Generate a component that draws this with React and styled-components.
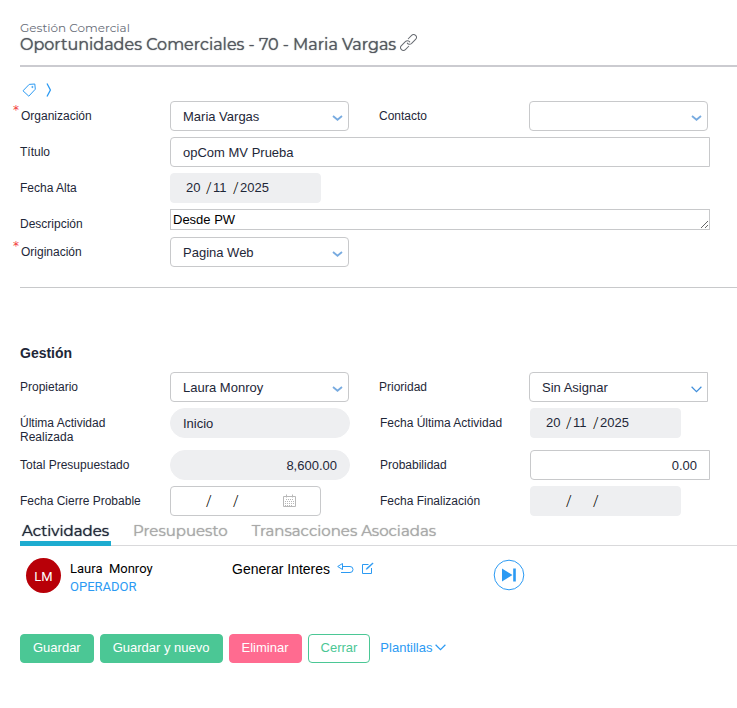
import React from "react";
import styled, { createGlobalStyle, css } from "styled-components";

const c = {
  ink: "#1e2738",
  grey: "#54585f",
  line: "#c8c9cb",
  fill: "#eeeff1",
  blue: "#2b9af3",
  green: "#4bc795",
  pink: "#ff6b90",
};

const Global = createGlobalStyle`
  *, *::before, *::after { box-sizing: border-box; }
  body { margin: 0; background: #fff; color: ${c.ink}; font-family: "Liberation Sans", Arial, sans-serif; font-size: 13px; }
  button, input, select, textarea { font-family: inherit; font-size: 13px; color: inherit; }
`;

const Page = styled.main`
  padding: 20px 0 40px 20px;
`;

const Header = styled.header`
  border-bottom: 2px solid #cbcbd0;
  padding-bottom: 12px;
`;

const Module = styled.div`
  font: 400 12px/16px Montserrat, Inter, sans-serif;
  color: #686d78;
`;

const Title = styled.h1`
  display: flex;
  align-items: center;
  gap: 4px;
  margin: 0;
  height: 17px;
  font: 400 16px/17px Montserrat, Inter, sans-serif;
  color: ${c.grey};
  text-shadow: 0 0 1px ${c.grey};
  white-space: nowrap;
`;

const IconButton = styled.button`
  display: inline-flex;
  flex: none;
  padding: 0;
  border: 0;
  background: none;
  color: ${(p) => p.$color || c.blue};
  cursor: pointer;
`;

const LinkButton = styled(IconButton)`
  align-self: flex-end;
  margin-bottom: 2px;
`;

const Tools = styled.div`
  display: flex;
  align-items: center;
  gap: 9px;
  height: 34px;
  padding: 12px 0 0 2px;
`;

const Form = styled.section`
  display: flex;
  flex-direction: column;
  gap: 6px;
  padding-right: 27px;
`;

const Row = styled.div`
  display: grid;
  grid-template-columns: 150px minmax(0, 1fr) 180px minmax(0, 1fr);
  align-items: start;
  padding-right: ${(p) => (p.$inset ? "2px" : "0")};
  & > :nth-child(3) { margin-left: 30px; }
`;

const Label = styled.label`
  position: relative;
  padding: 8px 24px 0 0;
  font-size: 12px;
  line-height: 14px;
  white-space: ${(p) => (p.$wrap ? "normal" : "nowrap")};
  ${(p) =>
    p.$required &&
    css`
      padding-left: 1px;
      &::before {
        content: "*";
        position: absolute;
        left: -7px;
        top: 2px;
        color: #f23c3c;
        font: 12px/14px "DejaVu Sans", sans-serif;
      }
    `}
`;

const box = css`
  width: 100%;
  height: 30px;
  border: 1px solid ${c.line};
  border-radius: ${(p) => (p.$square ? "4px 0 0 4px" : "4px")};
  background: #fff;
  outline-color: ${c.blue};
`;

const SelectWrap = styled.div`
  position: relative;
  svg {
    position: absolute;
    right: 6px;
    top: 14px;
    pointer-events: none;
  }
`;

const SelectBox = styled.select`
  ${box}
  display: block;
  appearance: none;
  padding: 0 24px 0 12px;
`;

const TextBox = styled.input`
  ${box}
  display: block;
  padding: 0 12px;
  grid-column: ${(p) => (p.$wide ? "2 / -1" : "auto")};
  text-align: ${(p) => (p.$number ? "right" : "left")};
  ${(p) =>
    p.readOnly &&
    css`
      border-color: ${c.fill};
      border-radius: 15px;
      background: ${c.fill};
    `}
`;

const Area = styled.textarea`
  display: block;
  grid-column: 2 / -1;
  width: 100%;
  height: 21px;
  margin: 0;
  padding: 2px;
  border: 1px solid ${c.line};
  color: #000;
  line-height: 15px;
  resize: both;
  overflow: hidden;
`;

const DateBox = styled.div`
  ${box}
  display: flex;
  align-items: center;
  width: 151px;
  padding-left: 15px;
  ${(p) =>
    p.$locked &&
    css`
      border-color: ${c.fill};
      background: ${c.fill};
    `}
  span { width: 7px; font: 300 16px/20px "Open Sans", sans-serif; color: #000; }
`;

const DatePart = styled.input`
  width: ${(p) => (p.$year ? "38px" : "20px")};
  padding: 0;
  border: 0;
  background: none;
  line-height: 16px;
`;

const Calendar = styled(IconButton)`
  margin-left: 5px;
`;

const Rule = styled.hr`
  margin: 20px 0 0;
  border: 0;
  border-top: 1px solid ${c.line};
`;

const SectionTitle = styled.h2`
  margin: 57px 0 11px;
  font-size: 14px;
  line-height: 16px;
`;

const Tabs = styled.nav`
  display: flex;
  gap: 20px;
  margin-top: 4px;
  border-bottom: 1px solid #d9d9db;
`;

const Tab = styled.button`
  height: 26px;
  margin-bottom: -1px;
  padding: 1px 2px 0;
  border: 0;
  border-bottom: 5px solid ${(p) => (p.$active ? "#1eacd0" : "transparent")};
  background: none;
  && { font: 400 15px/20px Montserrat, Inter, sans-serif; }
  color: ${(p) => (p.$active ? c.ink : "#a9a9a9")};
  text-shadow: 0 0 1px currentColor;
  white-space: nowrap;
  cursor: pointer;
`;

const Activity = styled.article`
  display: grid;
  grid-template-columns: 35px 153px 252px auto;
  gap: 9px;
  padding: 12px 0 0 6px;
`;

const Avatar = styled.div`
  display: grid;
  place-items: center;
  width: 35px;
  height: 35px;
  border-radius: 50%;
  background: #b80008;
  color: #fff;
  font: 13px/17px Roboto, sans-serif;
  padding-top: 2px;
`;

const Person = styled.div`
  padding-top: 2px;
  font: 13px/18px Roboto, sans-serif;
  color: #000;
  white-space: pre;
`;

const Role = styled.div`
  color: ${c.blue};
`;

const Task = styled.div`
  display: flex;
  align-items: center;
  gap: 7px;
  height: 21px;
  color: #000;
  font-size: 14px;
`;

const Actions = styled.footer`
  display: flex;
  flex-wrap: wrap;
  gap: 6px;
  margin-top: 38px;
`;

const Button = styled.button`
  height: 29px;
  padding: 0 12px 2px;
  border: 1px solid ${(p) => p.$tone};
  border-radius: 4px;
  background: ${(p) => (p.$outline ? "#fff" : p.$tone)};
  color: ${(p) => (p.$outline ? p.$tone : "#fff")};
  cursor: pointer;
`;

const Templates = styled(IconButton)`
  align-items: center;
  gap: 3px;
  height: 27px;
  margin-left: 4px;
`;

const Chevron = ({ color = "#78abe0", thin }) => (
  <svg width="11" height="7" viewBox="0 0 11 7" fill="none" stroke={color} strokeWidth={thin ? 1.2 : 1.8} aria-hidden="true">
    <path d={thin ? "M.6.8 5.5 5.6 10.4.8" : "M1 1 5.5 4.8 10 1"} />
  </svg>
);

const Select = ({ id, value, square }) => (
  <SelectWrap>
    <SelectBox id={id} defaultValue={value} $square={square}>
      <option>{value}</option>
    </SelectBox>
    <Chevron thin={square} color={square ? "#3f8edb" : undefined} />
  </SelectWrap>
);

const DateField = ({ id, label, parts = ["", "", ""], locked }) => (
  <DateBox $locked={locked} role="group" aria-label={label}>
    <DatePart id={id} defaultValue={parts[0]} readOnly={locked} aria-label={`${label}: día`} />
    <span>/</span>
    <DatePart defaultValue={parts[1]} readOnly={locked} aria-label={`${label}: mes`} />
    <span>/</span>
    <DatePart $year defaultValue={parts[2]} readOnly={locked} aria-label={`${label}: año`} />
    {!locked && (
      <Calendar type="button" $color="#b8b8b8" aria-label="Calendario">
        <svg width="13" height="14" viewBox="0 0 13 14" fill="none" stroke="currentColor">
          <path d="M.5 2.5h12v10H.5zM3.5 0.5v3M9.5 0.5v3" />
          <path d="M3 5.5h8M2 7.5h9M2 9.5h9M2 11.5h7" strokeDasharray="1 1" />
        </svg>
      </Calendar>
    )}
  </DateBox>
);

export default function App() {
  const today = ["20", "11", "2025"];
  return (
    <>
      <Global />
      <Page>
        <Header>
          <Module>Gestión Comercial</Module>
          <Title>
            Oportunidades Comerciales - 70 - Maria Vargas
            <LinkButton $color="#666a70" aria-label="Enlace">
              <svg width="17" height="17" viewBox="0 0 17 17" fill="none" stroke="currentColor" strokeLinecap="round">
                <g transform="rotate(-45 8.5 8.5)">
                  <path d="M6 11.3H1.3a2.8 2.8 0 0 1 0-5.6h5.9a2.8 2.8 0 0 1 2.6 3.2" />
                  <path d="M11 5.7h4.7a2.8 2.8 0 0 1 0 5.6H9.8a2.8 2.8 0 0 1-2.6-3.2" />
                </g>
              </svg>
            </LinkButton>
          </Title>
        </Header>

        <Tools>
          <IconButton aria-label="Etiquetas">
            <svg width="15" height="14" viewBox="0 0 15 14" fill="none" stroke="currentColor" strokeLinejoin="round">
              <path d="M1 7.8 7.2 1.4 12.8 1 13.3 6.2 6.8 13.2z" />
              <circle cx="10.4" cy="4" r=".6" />
            </svg>
          </IconButton>
          <IconButton aria-label="Mostrar más">
            <svg width="6" height="14" viewBox="0 0 6 14" fill="none" stroke="currentColor" strokeWidth="1.3">
              <path d="M1 .5 4.4 7 1 13.5" />
            </svg>
          </IconButton>
        </Tools>

        <Form>
          <Row $inset>
            <Label htmlFor="org" $required>Organización</Label>
            <Select id="org" value="Maria Vargas" />
            <Label htmlFor="contact">Contacto</Label>
            <Select id="contact" value="" />
          </Row>
          <Row>
            <Label htmlFor="title">Título</Label>
            <TextBox id="title" $wide $square defaultValue="opCom MV Prueba" />
          </Row>
          <Row>
            <Label htmlFor="created">Fecha Alta</Label>
            <DateField id="created" label="Fecha Alta" parts={today} locked />
          </Row>
          <Row>
            <Label htmlFor="desc">Descripción</Label>
            <Area id="desc" rows={1} defaultValue="Desde PW" />
          </Row>
          <Row $inset>
            <Label htmlFor="origin" $required>Originación</Label>
            <Select id="origin" value="Pagina Web" />
          </Row>
        </Form>

        <Rule />
        <SectionTitle>Gestión</SectionTitle>

        <Form>
          <Row $inset>
            <Label htmlFor="owner">Propietario</Label>
            <Select id="owner" value="Laura Monroy" />
            <Label htmlFor="priority">Prioridad</Label>
            <Select id="priority" value="Sin Asignar" square />
          </Row>
          <Row>
            <Label htmlFor="last" $wrap>Última Actividad Realizada</Label>
            <TextBox id="last" readOnly value="Inicio" />
            <Label htmlFor="lastDate">Fecha Última Actividad</Label>
            <DateField id="lastDate" label="Fecha Última Actividad" parts={today} locked />
          </Row>
          <Row>
            <Label htmlFor="total">Total Presupuestado</Label>
            <TextBox id="total" readOnly $number value="8,600.00" />
            <Label htmlFor="chance">Probabilidad</Label>
            <TextBox id="chance" $number $square defaultValue="0.00" />
          </Row>
          <Row>
            <Label htmlFor="close">Fecha Cierre Probable</Label>
            <DateField id="close" label="Fecha Cierre Probable" />
            <Label htmlFor="end">Fecha Finalización</Label>
            <DateField id="end" label="Fecha Finalización" locked />
          </Row>
        </Form>

        <Tabs>
          <Tab $active>Actividades</Tab>
          <Tab>Presupuesto</Tab>
          <Tab>Transacciones Asociadas</Tab>
        </Tabs>

        <Activity>
          <Avatar>LM</Avatar>
          <Person>
            {"Laura  Monroy"}
            <Role>OPERADOR</Role>
          </Person>
          <Task>
            Generar Interes
            <IconButton aria-label="Regresar">
              <svg width="17" height="11" viewBox="0 0 17 11" fill="none" stroke="currentColor" strokeLinejoin="round">
                <path d="M5.5.5v6L.7 3.5zM5.5 3.5h7.5a3 3 0 0 1 0 6H4" />
              </svg>
            </IconButton>
            <IconButton aria-label="Editar">
              <svg width="13" height="13" viewBox="0 0 13 13" fill="none" stroke="currentColor" strokeWidth="1">
                <path d="M7.5 2.5h-6v9h9V6" />
                <path d="M5 7.5 5.6 6l5.9-5.2.8.8-5.8 5.3z" fill="currentColor" strokeWidth=".3" />
              </svg>
            </IconButton>
          </Task>
          <IconButton aria-label="Siguiente">
            <svg width="32" height="34" viewBox="0 0 32 34" fill="none" stroke="currentColor">
              <circle cx="16" cy="17" r="14.8" />
              <path d="M9 10.5v13L19.5 17zM20.2 10.5h2.6v13h-2.6z" fill="currentColor" stroke="none" />
            </svg>
          </IconButton>
        </Activity>

        <Actions>
          <Button $tone={c.green}>Guardar</Button>
          <Button $tone={c.green}>Guardar y nuevo</Button>
          <Button $tone={c.pink}>Eliminar</Button>
          <Button $tone={c.green} $outline>Cerrar</Button>
          <Templates>
            Plantillas <Chevron thin color={c.blue} />
          </Templates>
        </Actions>
      </Page>
    </>
  );
}
